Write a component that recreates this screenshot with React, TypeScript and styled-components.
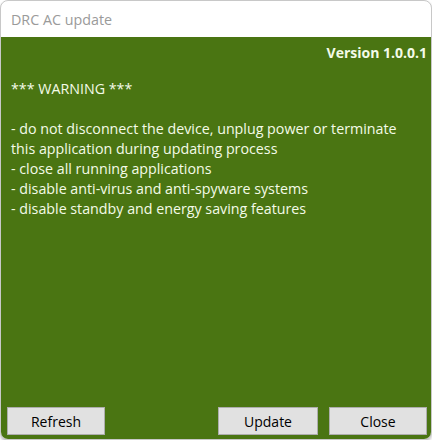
import React from 'react'
import styled, { createGlobalStyle } from 'styled-components'

const GlobalStyle = createGlobalStyle`
  html, body {
    margin: 0;
    padding: 0;
    background: #ffffff;
  }
  body {
    font-family: "Open Sans", "Noto Sans", sans-serif;
  }
`

//Styled Components
const Window = styled.div`
  width: 432px;
  height: 440px;
  box-sizing: border-box;
  display: flex;
  flex-direction: column;
  border: 1px solid #c8c8c8;
  border-radius: 8px;
  overflow: hidden;
  background: #ffffff;
  box-shadow: 0 2px 3px rgba(0, 0, 0, 0.25);
`

const TitleBar = styled.div`
  height: 36px;
  display: flex;
  align-items: center;
  padding-left: 10px;
  color: #9a9a9a;
  font-size: 14.3px;
  flex-shrink: 0;
`

const Body = styled.div`
  flex: 1;
  display: flex;
  flex-direction: column;
  background: #4a7512;
  color: #f4fbe8;
  padding: 6px 4px 4px 6px;
`

const Version = styled.div`
  align-self: flex-end;
  font-weight: 700;
  font-size: 14px;
  line-height: 20px;
  margin-bottom: 16px;
`

const Message = styled.div`
  padding-left: 4px;
  font-size: 14.25px;
  line-height: 20px;
  white-space: pre-line;
  flex: 1;
`

const ButtonRow = styled.div`
  display: flex;
  gap: 11px;
`

const Spacer = styled.div`
  flex: 1;
`

const Button = styled.button<{ $width: number }>`
  width: ${(p) => p.$width}px;
  height: 28px;
  background: #e1e1e1;
  border: 1px solid #adadad;
  border-radius: 0;
  font-family: inherit;
  font-size: 14px;
  color: #000;
  padding: 0;
`

const warning = `*** WARNING ***

- do not disconnect the device, unplug power or terminate
this application during updating process
- close all running applications
- disable anti-virus and anti-spyware systems
- disable standby and energy saving features`

const App: React.FC = () => {
  return (
    <>
      <GlobalStyle />
      <Window>
        <TitleBar>DRC AC update</TitleBar>
        <Body>
          <Version>Version 1.0.0.1</Version>
          <Message>{warning}</Message>
          <ButtonRow>
            <Button $width={98}>Refresh</Button>
            <Spacer />
            <Button $width={100}>Update</Button>
            <Button $width={98}>Close</Button>
          </ButtonRow>
        </Body>
      </Window>
    </>
  )
}
export default App
